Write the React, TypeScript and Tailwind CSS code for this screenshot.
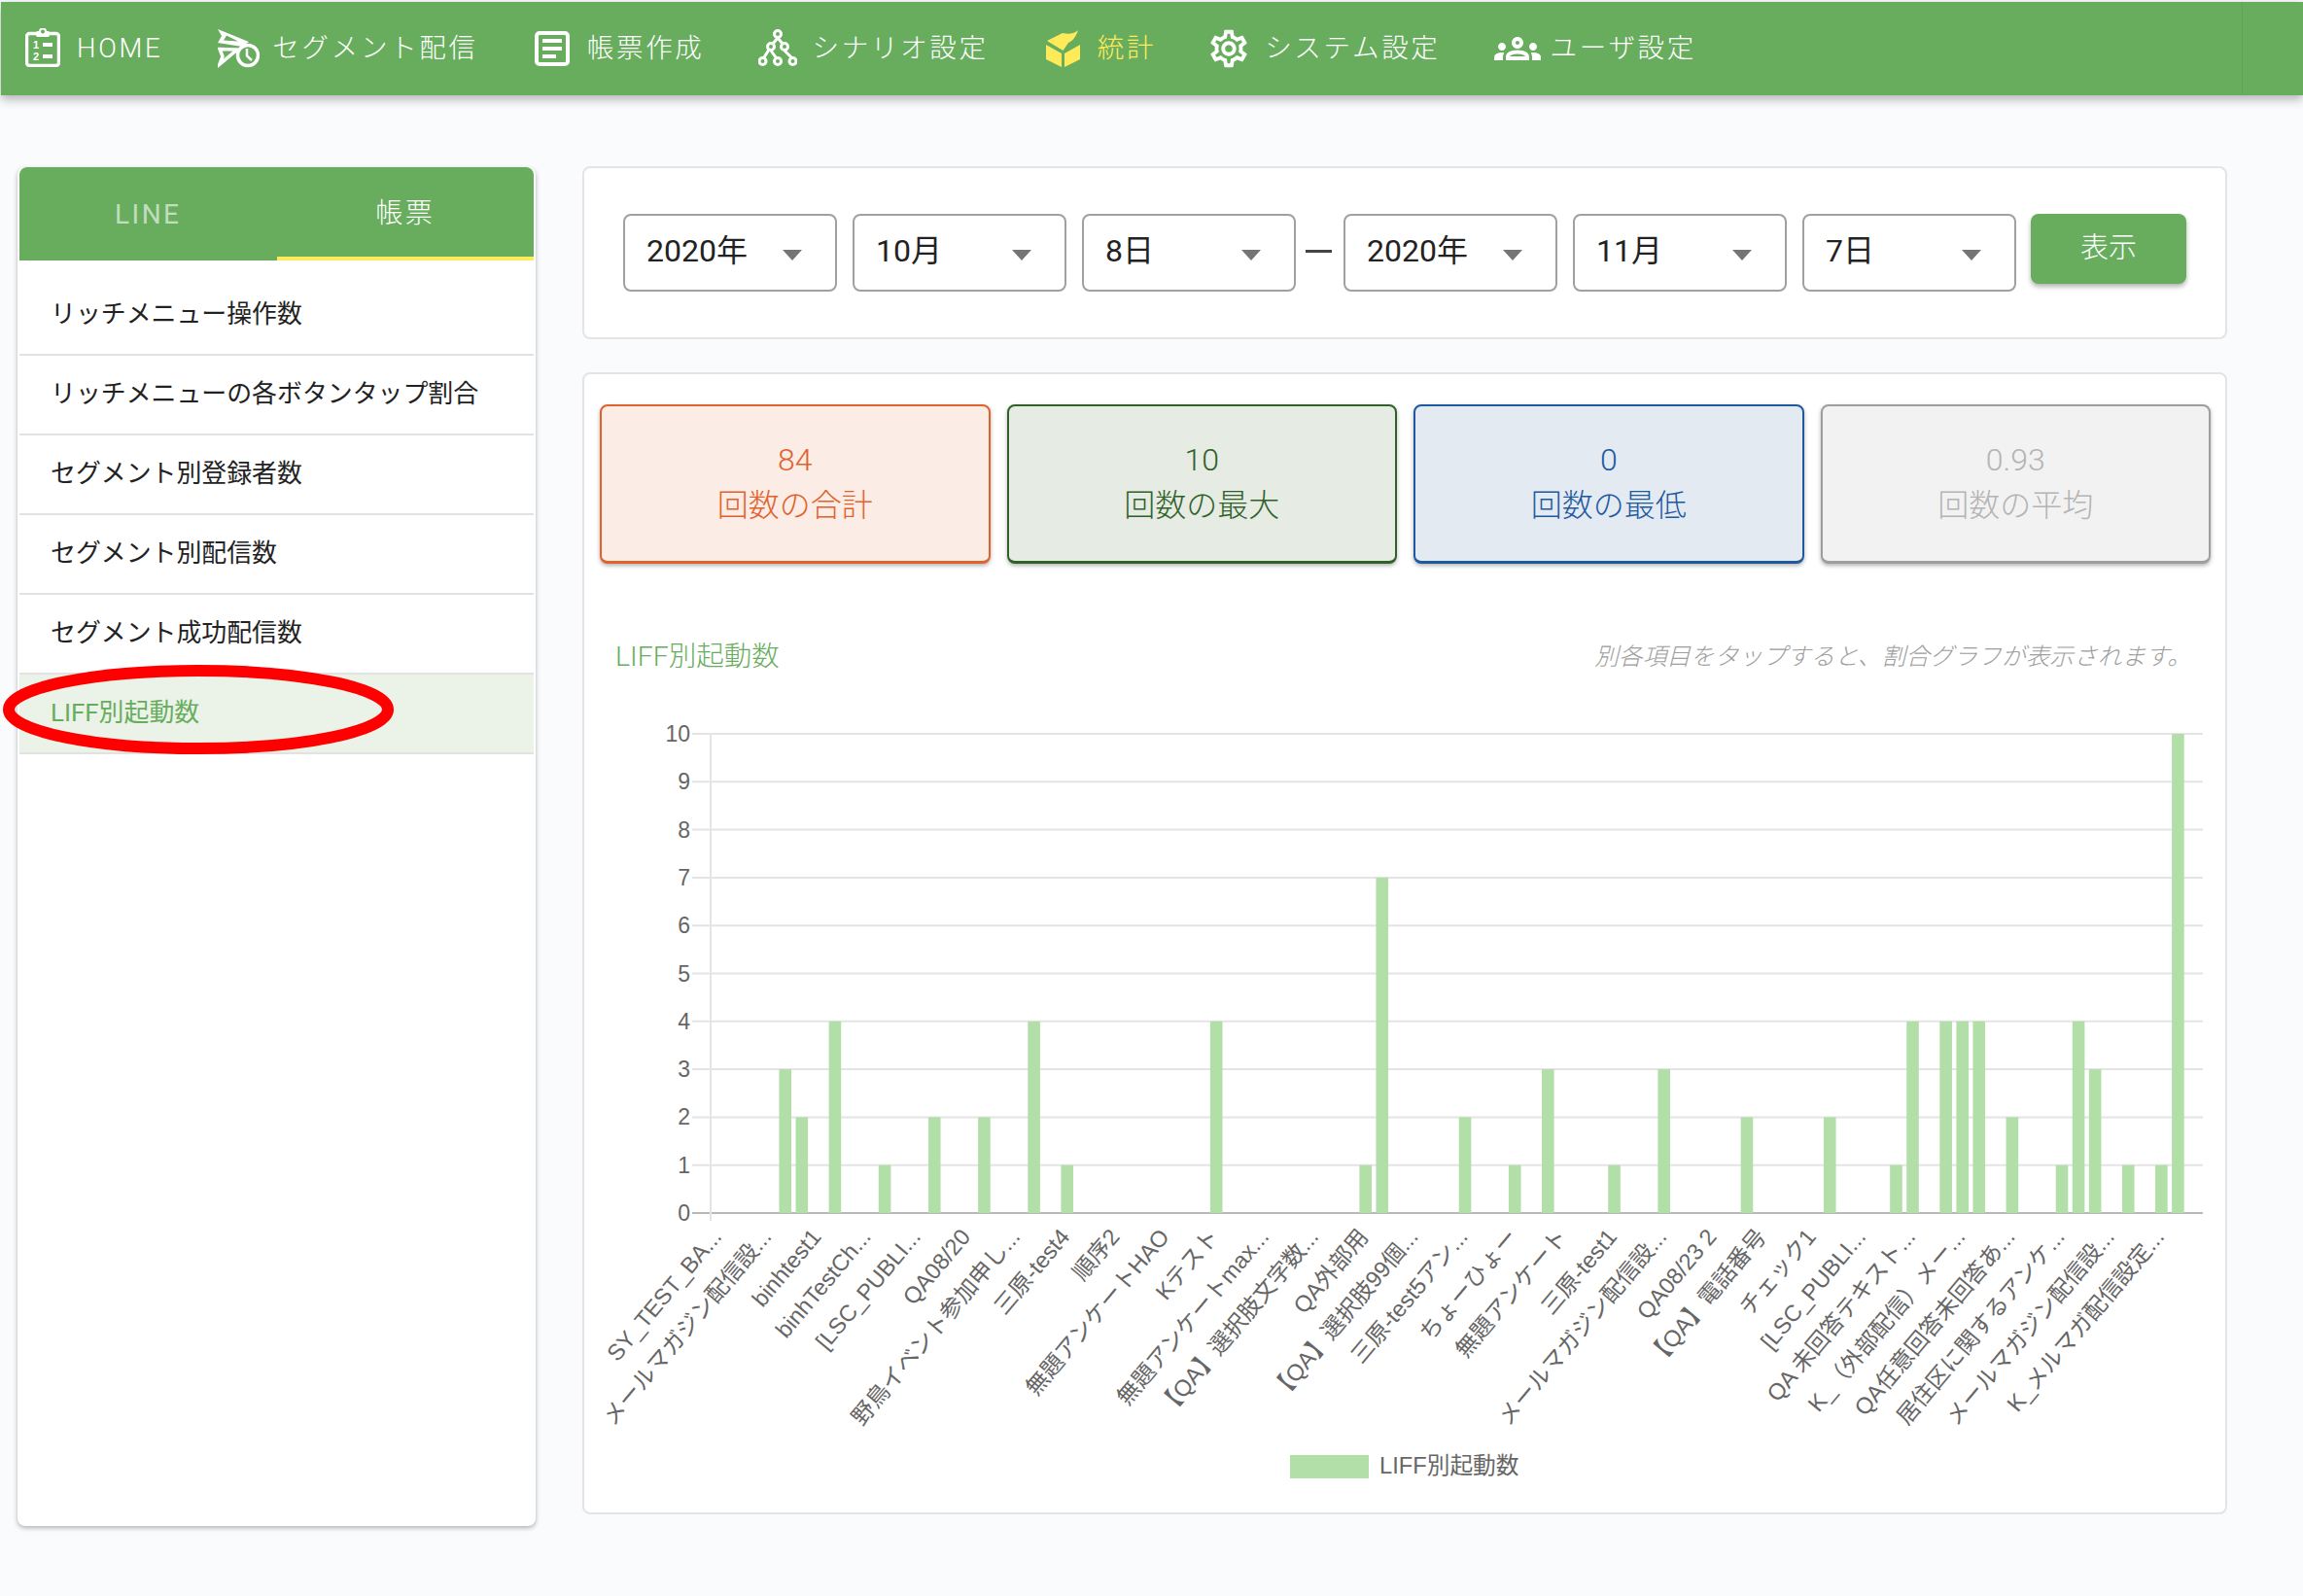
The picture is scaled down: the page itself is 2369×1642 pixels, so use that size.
import { MdOutlineGroups, MdOutlineSettings } from "react-icons/md";

const sans = "font-['Roboto','Noto_Sans_CJK_JP',sans-serif]";

// values per category, 90 in total, zero where nothing is listed
const barValues: Record<number, number> = {
  4: 3, 5: 2, 7: 4, 10: 1, 13: 2, 16: 2, 19: 4, 21: 1, 30: 4, 39: 1, 40: 7,
  45: 2, 48: 1, 50: 3, 54: 1, 57: 3, 62: 2, 67: 2, 71: 1, 72: 4, 74: 4, 75: 4,
  76: 4, 78: 2, 81: 1, 82: 4, 83: 3, 85: 1, 87: 1, 88: 10,
};

const chartLabels = [
  "SY_TEST_BA...",
  "メールマガジン配信設...",
  "binhtest1",
  "binhTestCh...",
  "[LSC_PUBLI...",
  "QA08/20",
  "野鳥イベント参加申し...",
  "三原-test4",
  "順序2",
  "無題アンケートHAO",
  "Kテスト",
  "無題アンケートmax...",
  "【QA】選択肢文字数...",
  "QA外部用",
  "【QA】選択肢99個...",
  "三原-test5アン...",
  "ちょーひょー",
  "無題アンケート",
  "三原-test1",
  "メールマガジン配信設...",
  "QA08/23 2",
  "【QA】電話番号",
  "チェック1",
  "[LSC_PUBLI...",
  "QA 未回答テキスト...",
  "K_（外部配信）メー...",
  "QA任意回答未回答あ...",
  "居住区に関するアンケ...",
  "メールマガジン配信設...",
  "K_メルマガ配信設定...",
];

const menuItems = [
  "リッチメニュー操作数",
  "リッチメニューの各ボタンタップ割合",
  "セグメント別登録者数",
  "セグメント別配信数",
  "セグメント成功配信数",
];

const stats = [
  { value: "84", label: "回数の合計", className: "border-[#e0622d] bg-[#fbece5] text-[#e0622d]" },
  { value: "10", label: "回数の最大", className: "border-[#2f6228] bg-[#e6ebe4] text-[#2f6228]" },
  { value: "0", label: "回数の最低", className: "border-[#1f5aa0] bg-[#e3eaf2] text-[#1f5aa0]" },
  { value: "0.93", label: "回数の平均", className: "border-[#9e9e9e] bg-[#f2f2f2] text-[#b4b4b4]" },
];

function HomeIcon() {
  return (
    <svg width="36" height="40" viewBox="0 0 36 40" fill="none" className="-mt-0.5 shrink-0">
      <rect x="1.5" y="5.5" width="33" height="33" rx="3" stroke="white" strokeWidth="3.5" />
      <rect x="11" y="3" width="14" height="6" rx="2" fill="white" />
      <circle cx="18" cy="3.5" r="3" fill="#68ad5e" stroke="white" strokeWidth="2" />
      <text x="8" y="21" fontSize="11" fontWeight="700" fill="white" className="font-['Liberation_Sans',sans-serif]">1</text>
      <text x="8" y="33" fontSize="11" fontWeight="700" fill="white" className="font-['Liberation_Sans',sans-serif]">2</text>
      <rect x="18" y="15" width="10" height="4" fill="white" />
      <rect x="18" y="27" width="10" height="4" fill="white" />
    </svg>
  );
}

function SendClockIcon() {
  return (
    <svg width="43" height="40" viewBox="0 0 43 40" fill="none" className="shrink-0">
      <path d="M0 0L32 13L25 18L0 14L4 7Z" fill="white" />
      <path d="M9 6.5L21 12.5L6 11.5Z" fill="#68ad5e" />
      <path d="M2 20.5L20 21L2 36L5 28Z" stroke="white" strokeWidth="3.5" />
      <circle cx="31" cy="27" r="10.5" fill="#68ad5e" stroke="white" strokeWidth="3.5" />
      <path d="M30 20V27.5L35 32" stroke="white" strokeWidth="2.5" />
    </svg>
  );
}

function ReportIcon() {
  return (
    <svg width="36" height="36" viewBox="0 0 36 36" fill="none" className="shrink-0">
      <rect x="2" y="2" width="32" height="32" rx="3" stroke="white" strokeWidth="4" />
      <path d="M8 10H28M8 18H28M8 26H22" stroke="white" strokeWidth="4" />
    </svg>
  );
}

function ScenarioIcon() {
  return (
    <svg width="40" height="40" viewBox="0 0 40 40" fill="none" stroke="white" strokeWidth="3" className="shrink-0">
      <path d="M20 9L15 15M20 9L25 15M11 21L6 29M13 22L18 29M27 22L34 29" />
      <circle cx="20" cy="5" r="3.5" />
      <circle cx="13" cy="18" r="3.5" />
      <circle cx="27" cy="18" r="3.5" />
      <circle cx="4.5" cy="33" r="3.5" />
      <circle cx="20" cy="33" r="3.5" />
      <circle cx="35.5" cy="33" r="3.5" />
    </svg>
  );
}

function BoxIcon() {
  return (
    <svg width="35" height="38" viewBox="0 0 35 38" fill="#ffeb5a" className="shrink-0">
      <path d="M0 15L16 24V38L0 30Z" />
      <path d="M19 24L35 15V30L19 38Z" />
      <path d="M1 11L17 3C24 5 30 3 33 0C31 6 28 11 23 13L17.5 21Z" />
    </svg>
  );
}

function NavItem({
  icon,
  label,
  active,
  className,
}: {
  icon: React.ReactNode;
  label: string;
  active?: boolean;
  className?: string;
}) {
  return (
    <div className={`flex items-center ${className ?? ""}`}>
      {icon}
      <span
        className={`whitespace-nowrap text-[27.5px] font-light tracking-[2.7px] ${active ? "text-[#ffeb5a]" : "text-white"}`}
      >
        {label}
      </span>
    </div>
  );
}

function DateSelect({ value }: { value: string }) {
  return (
    <div className="flex h-[80px] w-[220px] items-center justify-between rounded-lg border-2 border-[#a0a0a0] bg-white pl-[22px] pr-[34px] text-[32px] text-[#222]">
      <span className="pb-1">{value}</span>
      <span className="mt-1 h-0 w-0 border-x-[10px] border-t-[11px] border-x-transparent border-t-[#757575]" />
    </div>
  );
}

function Chart() {
  const left = 731;
  const right = 2266;
  const top = 754;
  const bottom = 1247;
  const step = (right - left) / 90;
  const unit = (bottom - top) / 10;

  return (
    <svg width="1657" height="810" viewBox="617 730 1657 810" className="block overflow-visible">
      {Array.from({ length: 11 }, (_, i) => {
        const y = bottom - i * unit;
        return (
          <g key={i}>
            <line
              x1="712"
              x2={right}
              y1={y}
              y2={y}
              stroke={i === 0 ? "#b8b8b8" : "#e4e4e4"}
              strokeWidth="2"
            />
            <text
              x="710"
              y={y + 8}
              textAnchor="end"
              fontSize="23"
              fill="#666"
              className="font-['Liberation_Sans',sans-serif]"
            >
              {i}
            </text>
          </g>
        );
      })}
      <line x1={left} x2={left} y1={top} y2={bottom + 8} stroke="#e4e4e4" strokeWidth="2" />
      {Object.entries(barValues).map(([index, value]) => (
        <rect
          key={index}
          x={left + (Number(index) + 0.5) * step - 6.3}
          y={bottom - value * unit}
          width="12.6"
          height={value * unit}
          fill="#b2dea7"
        />
      ))}
      {chartLabels.map((label, i) => (
        <text
          key={i}
          transform={`translate(${left + (i * 3 + 0.5) * step + 4} 1272) rotate(-50)`}
          textAnchor="end"
          fontSize="23.5"
          fill="#666"
          className="font-['Liberation_Sans','Noto_Sans_CJK_JP',sans-serif]"
        >
          {label}
        </text>
      ))}
      <rect x="1327" y="1496" width="81" height="24" fill="#b2dea7" />
      <text
        x="1419"
        y="1515"
        fontSize="23.7"
        fill="#666"
        className="font-['Liberation_Sans','Noto_Sans_CJK_JP',sans-serif]"
      >
        LIFF別起動数
      </text>
    </svg>
  );
}

export default function App() {
  return (
    <div className={`flex h-[1642px] w-[2369px] flex-col overflow-hidden bg-[#fafbfd] pt-0.5 ${sans}`}>
      <header className="relative ml-px flex h-24 shrink-0 items-center bg-[#68ad5e] pl-[25px] shadow-[0_4px_10px_rgba(0,0,0,0.3)]">
        <NavItem icon={<HomeIcon />} label="HOME" className="gap-[17px]" />
        <NavItem icon={<SendClockIcon />} label="セグメント配信" className="ml-[57px] gap-[13px]" />
        <NavItem icon={<ReportIcon />} label="帳票作成" className="ml-[58px] gap-[18px]" />
        <NavItem icon={<ScenarioIcon />} label="シナリオ設定" className="ml-[55px] gap-[16px]" />
        <NavItem icon={<BoxIcon />} label="統計" active className="ml-[59px] gap-[18px]" />
        <NavItem
          icon={<MdOutlineSettings size={46} color="white" className="shrink-0" />}
          label="システム設定"
          className="ml-[52px] gap-[14px]"
        />
        <NavItem
          icon={<MdOutlineGroups size={48} color="white" className="shrink-0" />}
          label="ユーザ設定"
          className="ml-[55px] gap-[10px]"
        />
        <div className="absolute bottom-0 left-[2305px] top-0 w-px bg-[#62a358]" />
      </header>

      <div className="flex items-start gap-[48px] pl-[18px] pt-[74px]">
        <aside className="h-[1398px] w-[533px] shrink-0 rounded-lg bg-white px-0.5 shadow-[0_2px_5px_rgba(0,0,0,0.3)]">
          <div className="flex h-24 overflow-hidden rounded-t-lg bg-[#68ad5e] text-[28px]">
            <div className="flex flex-1 items-center justify-center pt-0.5 tracking-[2.5px] text-white/60">LINE</div>
            <div className="flex flex-1 items-center justify-center border-b-4 border-[#ffeb5a] pt-1 font-light tracking-[2.5px] text-white">
              帳票
            </div>
          </div>
          <ul className="pt-[16px]">
            {menuItems.map((item) => (
              <li
                key={item}
                className="flex h-[82px] items-center border-b-2 border-[#e2e2e2] pb-0.5 pl-[32px] text-[25.9px] text-[#222]"
              >
                {item}
              </li>
            ))}
            <li className="relative flex h-[82px] items-center border-b-2 border-[#e2e2e2] bg-[#ebf3e8] pb-0.5 pl-[32px] text-[25.9px] text-[#68ad5e]">
              LIFF別起動数
              <svg
                width="402"
                height="94"
                viewBox="0 0 402 94"
                fill="none"
                className="absolute -left-[17px] -top-[11px]"
              >
                <ellipse cx="201" cy="47" rx="195" ry="40" stroke="#ff0000" strokeWidth="12" />
              </svg>
            </li>
          </ul>
        </aside>

        <main className="-mt-px flex w-[1692px] flex-col gap-[34px]">
          <section className="flex h-[178px] items-start rounded-lg border-2 border-[#e4e4e4] bg-white pl-[40px] pt-[47px]">
            <div className="flex gap-[16px]">
              <DateSelect value="2020年" />
              <DateSelect value="10月" />
              <DateSelect value="8日" />
            </div>
            <div className="ml-[10px] mr-[12px] mt-[37px] h-[3px] w-[27px] bg-[#444]" />
            <div className="flex gap-[16px]">
              <DateSelect value="2020年" />
              <DateSelect value="11月" />
              <DateSelect value="7日" />
            </div>
            <button className="ml-[15px] flex h-[72px] w-[160px] items-center justify-center rounded-lg bg-[#68ad5e] text-[29px] font-light text-white shadow-[0_3px_5px_rgba(0,0,0,0.3)]">
              表示
            </button>
          </section>

          <section className="flex h-[1175px] flex-col rounded-lg border-2 border-[#e4e4e4] bg-white pl-[16px] pr-[15px] pt-[31px]">
            <div className="grid grid-cols-4 gap-[17px]">
              {stats.map((stat) => (
                <div
                  key={stat.label}
                  className={`flex h-[164px] flex-col items-center justify-center rounded-lg border-2 border-b-[3px] pt-0.5 font-light shadow-[0_2px_4px_rgba(0,0,0,0.3)] ${stat.className}`}
                >
                  <div className="text-[32px] leading-[44px]">{stat.value}</div>
                  <div className="text-[32px] leading-[51px]">{stat.label}</div>
                </div>
              ))}
            </div>
            <div className="mt-[76px] flex h-10 items-center justify-between pl-[16px] pr-[20px]">
              <span className="text-[28.5px] font-light text-[#68ad5e]">LIFF別起動数</span>
              <span className="text-[24.7px] font-light italic text-[#9e9e9e]">
                別各項目をタップすると、割合グラフが表示されます。
              </span>
            </div>
            <div className="mt-[35px]">
              <Chart />
            </div>
          </section>
        </main>
      </div>
    </div>
  );
}
